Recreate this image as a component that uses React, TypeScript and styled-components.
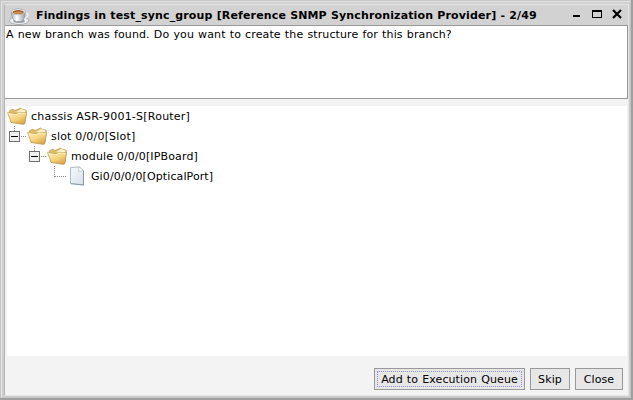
import React from 'react';
import styled, { createGlobalStyle } from 'styled-components';

const Global = createGlobalStyle`
  * { box-sizing: border-box; }
  body { margin: 0; overflow: hidden; }
  svg { display: block; flex: none; }
`;

const Frame = styled.div`
  width: 633px;
  height: 400px;
  display: flex;
  background: #c6c6c6;
  border-right: 2px solid #a0a0a0;
  border-bottom: 2px solid #a0a0a0;
  font: 11px/14px 'DejaVu Sans', sans-serif;
  color: #000;
`;

const Bevel = styled.div`
  flex: 1;
  display: flex;
  margin: 1px 0 0 1px;
  border: 1px solid #e4e4e4;
  border-right-color: #c4c4c4;
  border-bottom-color: #c4c4c4;
  background: #cfcfcf;
  padding: 2px 1px 1px 2px;
`;

const Content = styled.div`
  flex: 1;
  display: flex;
  flex-direction: column;
  border: 1px solid #e4e4e4;
  border-left-color: #b5b5b5;
`;

const TitleBar = styled.header`
  height: 20px;
  display: flex;
  align-items: center;
  padding: 1px 3px 0 4px;
  background: #d2d2d2;
`;

const Title = styled.h1`
  flex: 1;
  margin: 1px 0 0 7px;
  font-size: 11px;
  line-height: 14px;
  font-weight: bold;
  letter-spacing: 0.14px;
  word-spacing: 0.17px;
  white-space: nowrap;
`;

const Message = styled.div`
  height: 74px;
  padding: 2px 1px;
  background: #fff;
  border: 1px solid #999;
  border-left: 0;
  letter-spacing: 0.12px;
  word-spacing: 0.5px;
  white-space: nowrap;
`;

const Body = styled.main`
  flex: 1;
  display: flex;
  flex-direction: column;
  padding: 7px 1px 0 2px;
  background: #f3f3f3;
`;

const Tree = styled.div`
  height: 250px;
  background: #fff;
`;

const Row = styled.div<{ $indent: number }>`
  height: 20px;
  display: flex;
  align-items: center;
  padding-left: ${({ $indent }) => $indent}px;
`;

const Label = styled.span<{ $spacing: number }>`
  margin: 2px 0 0 4px;
  letter-spacing: ${({ $spacing }) => $spacing}px;
  white-space: pre;
`;

const Footer = styled.footer`
  display: flex;
  justify-content: flex-end;
  gap: 5px;
  padding: 12px 4px 0 0;
`;

const Button = styled.button<{ $width: number; $focused?: boolean }>`
  width: ${({ $width }) => $width}px;
  height: 22px;
  padding: 1px 0 0;
  border: 1px solid #999;
  background: #e7e7e7;
  font: inherit;
  letter-spacing: 0.1px;
  word-spacing: 0.5px;
  color: #000;
  white-space: nowrap;
  outline: ${({ $focused }) => ($focused ? '1px dotted #8f8fe0' : 'none')};
  outline-offset: -4px;
`;

const Cup = () => (
  <svg width="20" height="18" viewBox="0 0 20 18">
    <defs>
      <linearGradient id="cup" x1="0" x2="1">
        <stop offset="0" stopColor="#a9adb2" />
        <stop offset=".4" stopColor="#fff" />
        <stop offset="1" stopColor="#9a9fa4" />
      </linearGradient>
    </defs>
    <ellipse cx="10" cy="13.5" rx="9.6" ry="4" fill="#f0f2f3" stroke="#9a9fa4" strokeWidth=".8" />
    <ellipse cx="10" cy="14" rx="6" ry="2" fill="#9da2a7" />
    <path d="M15 6.5q4-1.5 3.8 1.5-.2 3-4.6 3" fill="none" stroke="#eef0f2" strokeWidth="1.5" />
    <path d="M2.2 5q.5 8.5 5 9.5h5q4-1.5 4-9.5z" fill="url(#cup)" stroke="#8b9095" strokeWidth=".6" />
    <ellipse cx="9.2" cy="4.8" rx="7" ry="2.9" fill="#fafafa" stroke="#a3a6aa" strokeWidth=".7" />
    <ellipse cx="9.2" cy="5.1" rx="5.8" ry="2" fill="#9c5f30" />
    <ellipse cx="9.2" cy="5.6" rx="4.2" ry="1.2" fill="#d7914a" />
  </svg>
);

const Folder = () => (
  <svg width="20" height="18" viewBox="0 0 20 18">
    <defs>
      <linearGradient id="folder" x1="0" y1="0" x2=".7" y2="1">
        <stop offset="0" stopColor="#fff0bb" />
        <stop offset=".55" stopColor="#f5d582" />
        <stop offset="1" stopColor="#d9a545" />
      </linearGradient>
    </defs>
    <path d="M4 15.5 2.2 4.5q0-1 .8-1.3L6 2.2l2 1.3L13.5 1l2 1.4 3 .4 1 1-1.5 12z" fill="#dfbd65" stroke="#b09252" strokeWidth=".6" />
    <path d="m9 5 5-3 4.5 1.5-.8 4z" fill="#fff5d2" />
    <path d="M.5 5.6 8.7 7l3-1.7 8 .3L17.5 17l-1.3.4-12-1.9z" fill="url(#folder)" stroke="#b08e48" strokeWidth=".6" />
    <path d="M1.6 6.5 9 7.8l3-1.7 6.6.2" fill="none" stroke="#fff5ca" strokeWidth=".8" />
  </svg>
);

const Sheet = () => (
  <svg width="20" height="20" viewBox="0 0 20 20">
    <defs>
      <linearGradient id="sheet" x1="0" y1="0" x2="1" y2="1">
        <stop offset="0" stopColor="#f8fafc" />
        <stop offset="1" stopColor="#d5e0e9" />
      </linearGradient>
    </defs>
    <path d="m3.5 1.7 8.5-.9 4.5 3.7V19L3.5 17.5z" fill="url(#sheet)" stroke="#9ca9b4" strokeWidth=".8" />
    <path d="m12 .8-.3 4.4 4.8-.5z" fill="#fff" stroke="#a9b5bf" strokeWidth=".6" />
    <path d="M16.5 5v14L4 17.7" fill="none" stroke="#82909c" strokeWidth=".8" />
  </svg>
);

const Branch = ({ leaf = false }: { leaf?: boolean }) => (
  <svg width="20" height="20" viewBox="0 0 20 20" shapeRendering="crispEdges">
    <g fill="none" stroke="#8c8c8c" strokeDasharray="1 1">
      <path d={leaf ? 'M7.5 0v11' : 'M7.5 0v5'} />
      <path d={leaf ? 'M8 10.5h12' : 'M14 10.5h6'} />
    </g>
    {!leaf && (
      <>
        <rect x="2.5" y="5.5" width="10" height="10" fill="#f0f0f0" stroke="#707070" />
        <path d="M4 10.5h7" stroke="#000" />
      </>
    )}
  </svg>
);

const Controls = () => (
  <svg width="54" height="14" viewBox="0 0 54 14" shapeRendering="crispEdges">
    <path d="M2 6h7v2H2z" />
    <path d="M21 1h10v8H21zm1 2v5h8V3z" fillRule="evenodd" />
    <path d="m42 1 8 8m0-8-8 8" stroke="#000" strokeWidth="2.2" shapeRendering="auto" />
  </svg>
);

const nodes = [
  { text: 'chassis ASR-9001-S[Router]', indent: 0, spacing: 0.23 },
  { text: 'slot 0/0/0[Slot]', indent: 0, spacing: 0.19 },
  { text: 'module 0/0/0[IPBoard]', indent: 20, spacing: 0.15 },
  { text: 'Gi0/0/0/0[OpticalPort]', indent: 40, spacing: 0.1 },
];

export default function App() {
  return (
    <Frame>
      <Global />
      <Bevel>
        <Content>
          <TitleBar>
            <Cup />
            <Title>Findings in test_sync_group [Reference SNMP Synchronization Provider] - 2/49</Title>
            <Controls />
          </TitleBar>
          <Message>A new branch was found. Do you want to create the structure for this branch?</Message>
          <Body>
            <Tree>
              {nodes.map((node, i) => (
                <Row key={node.text} $indent={node.indent}>
                  {i > 0 && <Branch leaf={i === 3} />}
                  {i === 3 ? <Sheet /> : <Folder />}
                  <Label $spacing={node.spacing}>{node.text}</Label>
                </Row>
              ))}
            </Tree>
            <Footer>
              <Button $width={151} $focused>Add to Execution Queue</Button>
              <Button $width={40}>Skip</Button>
              <Button $width={48}>Close</Button>
            </Footer>
          </Body>
        </Content>
      </Bevel>
    </Frame>
  );
}
